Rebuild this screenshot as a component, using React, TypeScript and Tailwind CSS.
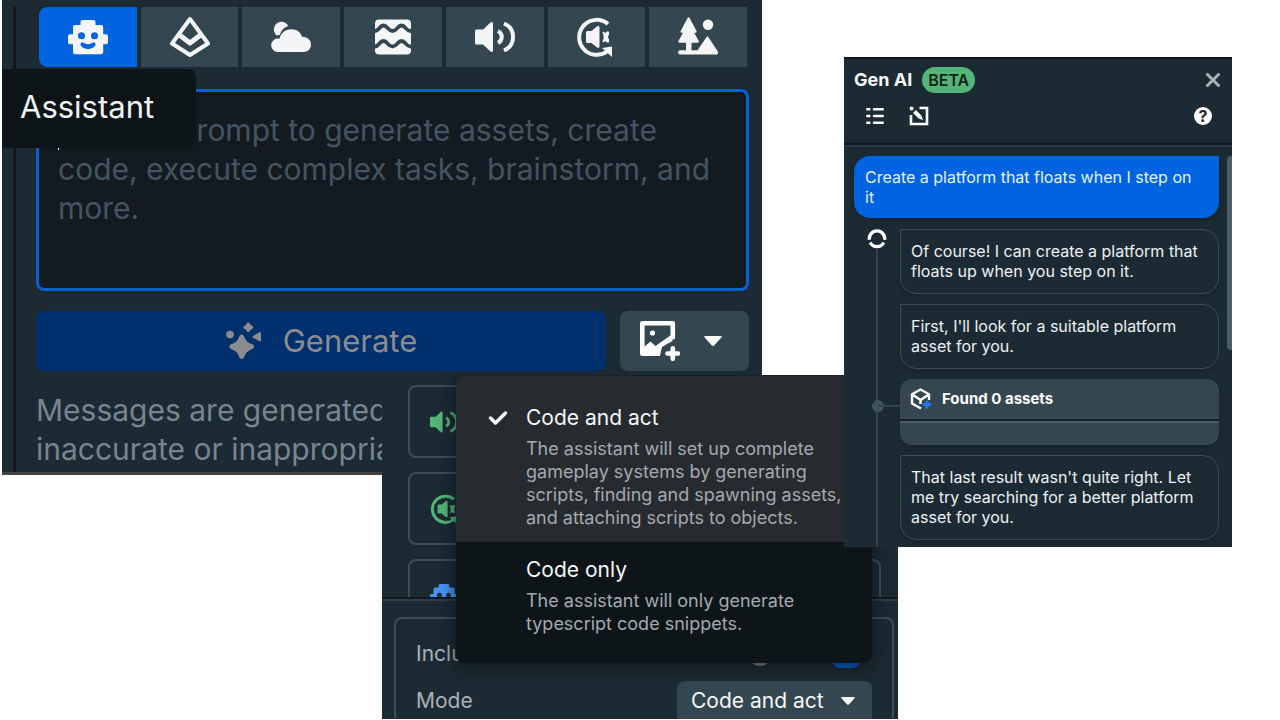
import { useState } from "react";
import type { ReactNode } from "react";

interface IconProps {
    className?: string
}

interface BubbleProps {
    children: ReactNode
}

interface Mode {
    id: string;
    title: string;
    text: string;
}

const modes: Mode[] = [
    {
        id: "act",
        title: "Code and act",
        text: "The assistant will set up complete gameplay systems by generating scripts, finding and spawning assets, and attaching scripts to objects.",
    },
    {
        id: "only",
        title: "Code only",
        text: "The assistant will only generate typescript code snippets.",
    },
];

function RobotIcon({ className }: IconProps) {
    return (
        <svg viewBox="0 0 40 40" className={className} fill="currentColor" fillRule="evenodd" aria-hidden="true">
            <path d="M14.5 3h11a2 2 0 0 1 2 2v3H33a2.200 2.200 0 0 1 2.200 2.200v7.100H38a2 2 0 0 1 2 2v6a2 2 0 0 1-2 2h-2.800V35a2.300 2.300 0 0 1-2.200 2.300H7.200A2.200 2.200 0 0 1 5 35v-7.700H2a2 2 0 0 1-2-2v-6a2 2 0 0 1 2-2h3v-7.100A2.200 2.200 0 0 1 7.200 8h5.300V5a2 2 0 0 1 2-2zM13.500 15.200a3.500 3.500 0 1 0 0 7 3.500 3.500 0 0 0 0-7zm13 0a3.500 3.500 0 1 0 0 7 3.500 3.500 0 0 0 0-7zM12.500 27.500c0-2 1.700-2.500 3.200-1.500 2.600 1.500 6 1.500 8.600 0 1.500-1 3.200-.5 3.200 1.500 0 2-3.500 4.500-7.500 4.500s-7.500-2.500-7.500-4.500z" />
        </svg>
    );
}

function PyramidIcon({ className }: IconProps) {
    return (
        <svg viewBox="0 0 40 40" className={className} fill="none" stroke="currentColor" strokeWidth="4" strokeLinejoin="round" aria-hidden="true">
            <path d="M20 2 38 26.500 20 38 2 26.500z" />
            <path strokeWidth="5" d="M9.500 18 20 26l10.500-8" />
        </svg>
    );
}

function CloudIcon({ className }: IconProps) {
    return (
        <svg viewBox="0 0 40 40" className={className} fill="currentColor" aria-hidden="true">
            <circle cx="10.500" cy="12.500" r="7.700" />
            <path fill="#344751" d="M3 21c2-2.500 4-3 6-3 1-5 5-9 11-9.500L26 20z" />
            <path d="M7 35a6.700 6.700 0 1 1 1.500-13.200C9.500 16.500 14 12.300 20.500 12.300c5 0 9 2.700 10.500 7.500 5 0 9 3 9 7.700 0 4.500-3.300 7.500-7.500 7.500z" />
        </svg>
    );
}

function WavesIcon({ className }: IconProps) {
    return (
        <svg viewBox="0 0 40 40" className={className} aria-hidden="true">
            <rect x="2" y="2.500" width="36" height="35" rx="4" fill="currentColor" />
            <g fill="none" stroke="#344751" strokeWidth="3.800">
                <path d="M0 14h2c4 0 4.500-5.500 8.500-5.500s4.500 5.500 9 5.500 5-5.500 9-5.500 4.500 5.500 9 5.500h3" />
                <path d="M0 29.500h2c4 0 4.500-5.500 8.500-5.500s4.500 5.500 9 5.500 5-5.500 9-5.500 4.500 5.500 9 5.500h3" />
            </g>
        </svg>
    );
}

function SpeakerIcon({ className }: IconProps) {
    return (
        <svg viewBox="0 0 40 40" className={className} fill="none" stroke="currentColor" aria-hidden="true">
            <path fill="currentColor" stroke="none" d="M1.500 12.500H8L15.500 5.500c1-.8 2.500-.5 2.500 1v27c0 1.500-1.500 1.800-2.500 1L8 27.500H1.500A1.500 1.500 0 0 1 0 26V14a1.500 1.500 0 0 1 1.500-1.500z" />
            <path strokeWidth="4" d="M23 14c5 2.500 5 9.500 0 12" />
            <path strokeWidth="4" d="M29 6.500c12 5 12 22 0 27" />
        </svg>
    );
}

function SpeakerLoopIcon({ className }: IconProps) {
    return (
        <svg viewBox="0 0 40 40" className={className} fill="none" stroke="currentColor" aria-hidden="true">
            <path strokeWidth="4" d="M32 7A17.500 17.500 0 1 0 31 34.500" />
            <path fill="currentColor" stroke="none" d="M26 31 36 29.500v10.500z" />
            <path fill="currentColor" stroke="none" d="M11.500 14h4l5.500-4.500c1-.8 2.500-.3 2.500 1v19c0 1.300-1.500 1.800-2.500 1L15.500 26h-4a1.500 1.500 0 0 1-1.500-1.500v-9a1.500 1.500 0 0 1 1.500-1.500z" />
            <path fill="currentColor" stroke="none" d="M26.500 15.500c0-1 1-1 1.500-.5l1 1 2-1.500h2v3l-1 2.500 1 2.500v3h-2l-2-1.500-1 1c-.5.500-1.500.5-1.500-.5 1.500-3 1.500-6 0-9z" />
        </svg>
    );
}

function TreesIcon({ className }: IconProps) {
    return (
        <svg viewBox="0 0 40 40" className={className} fill="currentColor" aria-hidden="true">
            <path d="M9.700.8a1 1 0 0 1 1.800 0l7 13.200c.5 1-.1 1.700-1 1.700h-1.300l4.500 8.300c.5 1 0 1.700-1 1.700H1.500c-1 0-1.500-.7-1-1.700L5 15.700H3.700c-1 0-1.500-.7-1-1.700z" />
            <path d="M8 25h5.500v8.300h6L28.600 20a1 1 0 0 1 1.700 0L39.800 34.500c.8 1.300 0 3-1.600 3H2.200a2.100 2.100 0 0 1 0-4.200H8z" />
            <circle cx="30" cy="7.700" r="5.200" />
        </svg>
    );
}

function SparklesIcon({ className }: IconProps) {
    return (
        <svg viewBox="0 0 40 40" className={className} fill="currentColor" stroke="currentColor" strokeLinejoin="round" aria-hidden="true">
            <path strokeWidth="5" d="M16.700 16c2 5.500 4.300 7.700 9.800 9.700-5.500 2-7.800 4.200-9.800 9.700-2-5.500-4.300-7.700-9.800-9.700 5.500-2 7.800-4.200 9.800-9.700z" />
            <path strokeWidth="3.400" d="M23.300 3.300c.6 1.700 1.300 2.400 3.300 3-2 .6-2.700 1.300-3.300 3-.6-1.700-1.300-2.400-3.300-3 2-.6 2.700-1.300 3.300-3z" />
            <path strokeWidth="2" d="M35 12v7.500l-6.500-3.700z" />
            <circle cx="5" cy="13.500" r="3.500" strokeWidth="1" />
        </svg>
    );
}

function ImagePlusIcon({ className }: IconProps) {
    return (
        <svg viewBox="0 0 40 40" className={className} aria-hidden="true">
            <path fill="none" stroke="currentColor" strokeWidth="4.600" strokeLinejoin="round" d="M20 32.700H2.300V2.300h30.500v16" />
            <path fill="currentColor" d="M4 26l6.500-5.500L15.500 25l17-12v7L22 26l-2 8.500H3z" />
            <circle cx="12.500" cy="12" r="2.600" fill="currentColor" />
            <circle cx="33" cy="32.500" r="11" fill="#344751" />
            <path stroke="currentColor" strokeWidth="4.600" strokeLinecap="round" d="M27.500 32.500h10.500M32.800 27.200v10.600" />
        </svg>
    );
}

function CaretIcon({ className }: IconProps) {
    return (
        <svg viewBox="0 0 18 10" className={className} fill="currentColor" aria-hidden="true">
            <path d="M1.200 0h15.600c.9 0 1.200.9.600 1.500L10 9.400a1.400 1.400 0 0 1-2 0L.600 1.500C0 .9.300 0 1.200 0z" />
        </svg>
    );
}

function ListIcon({ className }: IconProps) {
    return (
        <svg viewBox="0 0 20 20" className={className} stroke="currentColor" strokeWidth="2.600" strokeLinecap="round" aria-hidden="true">
            <path d="M2.300 3.300h2M9 3.300h8.700M2.300 10h2M9 10h8.700M2.300 16.700h2M9 16.700h8.700" />
        </svg>
    );
}

function ComposeIcon({ className }: IconProps) {
    return (
        <svg viewBox="0 0 20 20" className={className} fill="none" stroke="currentColor" aria-hidden="true">
            <path strokeWidth="2.600" d="M10.500 2H18v16H2V9" />
            <path strokeWidth="4" d="M5.500 5.500l5.500 5.500" />
            <path fill="currentColor" stroke="none" d="M9.500 12.500l3-3 1.500 4.500z" />
            <circle cx="2.600" cy="2.600" r="2" fill="currentColor" stroke="none" />
        </svg>
    );
}

function RingIcon({ className }: IconProps) {
    return (
        <svg viewBox="0 0 20 20" className={className} fill="none" stroke="currentColor" strokeWidth="3.300" aria-hidden="true">
            <path d="M2.400 10.800A7.700 7.700 0 1 1 17.600 10.800" />
            <path d="M3.200 13.600a7.700 7.700 0 0 0 13.600 0" />
        </svg>
    );
}

function CubeIcon({ className }: IconProps) {
    return (
        <svg viewBox="0 0 22 22" className={className} fill="none" stroke="currentColor" strokeWidth="2.400" strokeLinejoin="round" aria-hidden="true">
            <path d="M11 20.500 2 15.500V6.200l8.500-4.700L19 6.200V12" />
            <path d="M2.500 6.500l8 5.500L19 6.500M10.500 12v4" />
            <path stroke="#1877f2" strokeWidth="3" d="M13 16.500h8M17 12.500v8" />
        </svg>
    );
}

const tools = [
    { id: "assistant", label: "Assistant", Icon: RobotIcon },
    { id: "mesh", label: "Mesh", Icon: PyramidIcon },
    { id: "sky", label: "Sky", Icon: CloudIcon },
    { id: "texture", label: "Texture", Icon: WavesIcon },
    { id: "sound", label: "Sound", Icon: SpeakerIcon },
    { id: "ambient", label: "Ambient sound", Icon: SpeakerLoopIcon },
    { id: "scene", label: "Scene", Icon: TreesIcon },
];

function PromptPanel() {
    const [tool, setTool] = useState("assistant");

    return (
        <section className="relative col-start-2 col-end-4 row-start-1 row-end-4 overflow-hidden border-b-3 border-[#45413f] bg-[#1c2a33] pl-[11px]">
            <div className="h-full border-l-3 border-[#10181d] pr-[13px] pl-5">
                <div className="mt-[7px] mr-0.5 ml-[3px] grid grid-cols-7 gap-1 overflow-hidden rounded-l-lg">
                    {tools.map(({ id, label, Icon }) => (
                        <button
                            key={id}
                            onClick={() => setTool(id)}
                            aria-label={label}
                            className={`flex h-[60px] items-center justify-center text-[#f4f5f6] ${tool === id ? "rounded-l-lg bg-[#0064e0]" : "bg-[#344751]"
                                }`}
                        >
                            <Icon className="size-10" />
                        </button>
                    ))}
                </div>

                <textarea
                    aria-label="Prompt"
                    placeholder="Write AI prompt to generate assets, create code, execute complex tasks, brainstorm, and more."
                    className="mt-[22px] block h-[202px] w-full resize-none rounded-lg border-3 border-[#0a60d0] bg-[#131b20] p-[19px] text-[30px] leading-[39px] outline-none placeholder:text-[#445462] placeholder:opacity-100"
                />

                <div className="mt-5 flex gap-3.5">
                    <button className="flex h-[60px] flex-1 items-center justify-center gap-[18px] rounded-lg bg-[#00306e] text-[31px] text-[#8b8c8f]">
                        <SparklesIcon className="size-10" />
                        Generate
                    </button>
                    <button aria-label="Add image" className="flex h-[60px] w-[129px] items-center rounded-lg bg-[#344751] pl-5 text-white">
                        <ImagePlusIcon className="size-10" />
                        <CaretIcon className="ml-6 h-[10px] w-[18px]" />
                    </button>
                </div>

                <p className="mt-5 text-[30px] leading-[39px] text-[#77858f]">
                    Messages are generated<br />
                    inaccurate or inappropriate
                </p>
            </div>

            {/* Text caret */}
            <span className="absolute top-[120px] left-14 h-[30px] w-px bg-white" />
            {/* Tooltip */}
            <div role="tooltip" className="absolute top-[69px] left-0 w-[194px] rounded-r-lg bg-[#0e1519] px-[18px] pt-[18px] pb-[22px] text-[31px] leading-[39px] text-[#f0f2f3]">
                Assistant
            </div>
        </section>
    );
}

function ModePanel() {
    const [mode, setMode] = useState("act");

    return (
        <section className="relative col-start-3 col-end-6 row-start-3 row-end-6 mb-px overflow-hidden bg-[#1c2a33] text-[21px]">
            <div className="flex h-[224px] flex-col gap-3.5 overflow-hidden border-b-2 border-[#10181d] pt-2.5 pr-[17px] pl-[26px]">
                <button aria-label="Sound" className="flex h-[73px] shrink-0 items-center rounded-lg border-2 border-[#3d4d57] px-5 text-[#53b577]">
                    <SpeakerIcon className="size-7" />
                </button>
                <button aria-label="Ambient sound" className="flex h-[73px] shrink-0 items-center rounded-lg border-2 border-[#3d4d57] px-5 text-[#53b577]">
                    <SpeakerLoopIcon className="size-[30px]" />
                </button>
                <button aria-label="Assistant" className="flex h-[73px] shrink-0 items-center rounded-lg border-2 border-[#3d4d57] px-5 text-[#4595f7]">
                    <RobotIcon className="size-7" />
                </button>
            </div>

            <div className="border-t-2 border-[#2f3e48] pt-4 pr-1 pl-3">
                <div className="rounded-t-lg border-2 border-b-0 border-[#3d4d57] px-5 text-[#aab2b9]">
                    <div className="flex h-[62px] items-center pt-2 pr-3">
                        <label htmlFor="include" className="flex-1">Include</label>
                        <span className="mr-[60px] size-6 rounded-full bg-[#85888d]" />
                        <input id="include" type="checkbox" defaultChecked className="size-7 appearance-none rounded-lg bg-[#0064e0]" />
                    </div>
                    <div className="flex items-start">
                        <label htmlFor="mode" className="flex-1 leading-10">Mode</label>
                        <div className="relative w-[195px]">
                            <select
                                id="mode"
                                value={mode}
                                onChange={(e) => setMode(e.target.value)}
                                className="h-12 w-full appearance-none rounded-lg bg-[#344751] pb-2 pl-3.5 text-[#f4f6f7]"
                            >
                                {modes.map((item) => (
                                    <option key={item.id} value={item.id}>{item.title}</option>
                                ))}
                            </select>
                            <CaretIcon className="pointer-events-none absolute top-4 right-[17px] h-2 w-3.5 text-white" />
                        </div>
                    </div>
                </div>
            </div>

            {/* Mode menu */}
            <div role="menu" className="absolute inset-x-0 top-px mr-[26px] ml-[74px] overflow-hidden rounded-lg bg-[#0e1519] pb-[15px] shadow-[0_4px_16px_2px_rgba(10,16,20,0.6)]">
                {modes.map((item) => (
                    <button
                        key={item.id}
                        role="menuitemradio"
                        aria-checked={mode === item.id}
                        onClick={() => setMode(item.id)}
                        className={`flex w-full items-start py-3 pr-6 pl-8 text-left first:pt-[26px] ${mode === item.id ? "bg-[#272b2f]" : ""
                            }`}
                    >
                        <svg viewBox="0 0 20 20" className="mt-1.5 mr-[18px] size-5 shrink-0" fill="none" stroke="white" strokeWidth="3.500" strokeLinecap="round" strokeLinejoin="round" aria-hidden="true">
                            {mode === item.id && <path d="M2.500 10l5 5L17.500 5" />}
                        </svg>
                        <span>
                            <span className="block leading-[31px] text-[#f4f6f7]">{item.title}</span>
                            <span className="mt-1 mb-px block text-lg leading-[23px] text-[#a3a9b0]">{item.text}</span>
                        </span>
                    </button>
                ))}
            </div>
        </section>
    );
}

function Bubble({ children }: BubbleProps) {
    return (
        <p className="rounded-2xl rounded-tl-none border border-[#3a4b55] px-2.5 pt-[11px] pb-3 text-base leading-5 text-[#eef1f3] shadow-md">
            {children}
        </p>
    );
}

function ChatPanel() {
    return (
        <section className="z-10 col-start-5 col-end-7 row-start-2 row-end-5 overflow-hidden border-t-2 border-[#10181d] bg-[#1c2a33]">
            <header className="border-b-2 border-[#10181d] pb-3">
                <div className="flex h-[42px] items-center pr-3 pl-2.5">
                    <h2 className="text-lg font-bold text-[#f4f6f7]">Gen AI</h2>
                    <span className="ml-2.5 rounded-full bg-[#53b577] px-1.5 text-base leading-[26px] font-semibold text-[#10241a]">BETA</span>
                    <button aria-label="Close" className="ml-auto text-[#a9b3ba]">
                        <svg viewBox="0 0 14 14" className="size-3.5" stroke="currentColor" strokeWidth="3" strokeLinecap="round" aria-hidden="true">
                            <path d="M1.500 1.500l11 11M12.500 1.500l-11 11" />
                        </svg>
                    </button>
                </div>
                <div className="flex h-[30px] items-center gap-6 pr-5 pl-[21px] text-white">
                    <button aria-label="History"><ListIcon className="size-5" /></button>
                    <button aria-label="New chat"><ComposeIcon className="size-5" /></button>
                    <button aria-label="Help" className="ml-auto size-[18px] rounded-full bg-white text-base leading-[18px] font-bold text-[#1c2a33]">?</button>
                </div>
            </header>

            <div className="flex border-t-2 border-[#2c3b45] pt-[9px]">
                <div className="min-w-0 flex-1 pr-2 pl-2.5">
                    <p className="rounded-2xl rounded-tr-none bg-[#0064e0] py-[11px] pr-5 pl-[11px] text-base leading-5 text-[#e8f1fd] shadow-md">
                        Create a platform that floats when I step on it
                    </p>
                    <div className="mt-[11px] flex gap-3.5">
                        {/* Timeline */}
                        <div className="relative flex w-8 flex-col items-center pl-3.5 text-white">
                            <RingIcon className="size-5" />
                            <span className="w-0.5 flex-1 bg-[#33434d]" />
                            <span className="absolute top-[171px] left-[18px] size-3 rounded-full bg-[#40535f]" />
                            <span className="absolute top-[176px] left-6 h-0.5 w-[22px] bg-[#33434d]" />
                        </div>
                        <div className="flex min-w-0 flex-1 flex-col gap-2.5 pb-2">
                            <Bubble>Of course! I can create a platform that floats up when you step on it.</Bubble>
                            <Bubble>First, I'll look for a suitable platform asset for you.</Bubble>
                            <div className="overflow-hidden rounded-xl bg-[#344751] shadow-md">
                                <h3 className="flex h-10 items-center gap-2.5 px-2.5 text-[15px] font-bold text-white">
                                    <CubeIcon className="size-[22px]" />
                                    Found 0 assets
                                </h3>
                                <div className="h-[26px] border-t-2 border-[#14202a] shadow-[inset_0_2px_0_#4a5d69]" />
                            </div>
                            <Bubble>That last result wasn't quite right. Let me try searching for a better platform asset for you.</Bubble>
                        </div>
                    </div>
                </div>
                {/* Scrollbar */}
                <div className="h-[194px] w-[5px] rounded-l bg-[#4a5d69]" />
            </div>
        </section>
    );
}

export default function App() {
    return (
        <main className="grid min-h-screen grid-cols-[2fr_380fr_380fr_82fr_54fr_334fr_48fr] grid-rows-[57px_318px_100px_72px_173px] overflow-hidden bg-white font-[Inter,sans-serif]">
            <PromptPanel />
            <ModePanel />
            <ChatPanel />
        </main>
    );
}
